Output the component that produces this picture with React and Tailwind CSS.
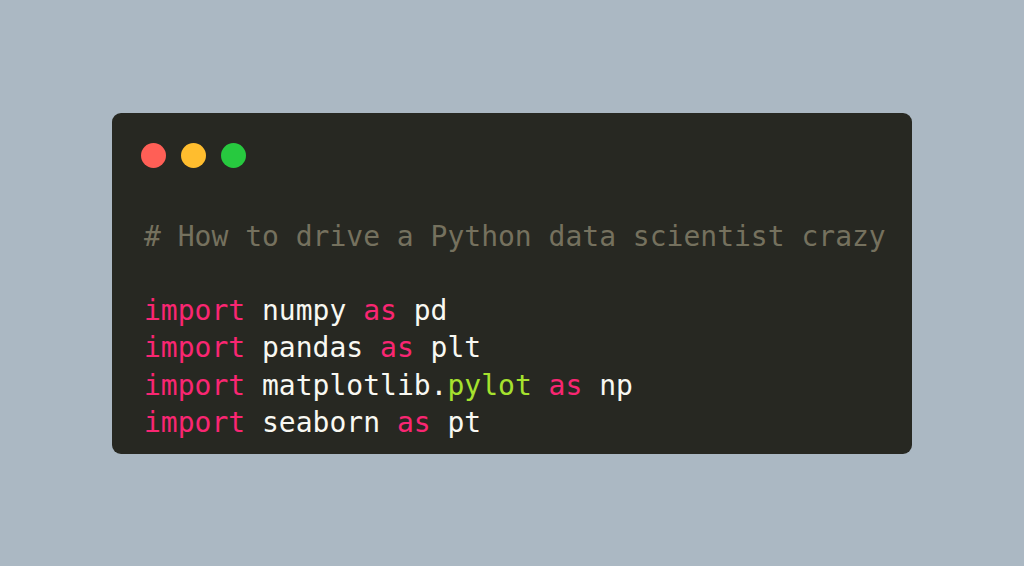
import React from "react";

const lines = [
  ["numpy", null, "pd"],
  ["pandas", null, "plt"],
  ["matplotlib.", "pylot", "np"],
  ["seaborn", null, "pt"],
];

export default function App() {
  return (
    <div className="w-[1024px] h-[566px] bg-[#abb8c3] flex items-center justify-center">
      <div className="w-[800px] h-[341px] bg-[#272822] rounded-[9px] pt-[30px] px-[29px]">
        {/* window controls */}
        <div className="flex gap-[15px]">
          <span className="w-[25px] h-[25px] rounded-full bg-[#ff5f56]" />
          <span className="w-[25px] h-[25px] rounded-full bg-[#ffbd2e]" />
          <span className="w-[25px] h-[25px] rounded-full bg-[#27c93f]" />
        </div>
        <pre className="mt-[50px] ml-[3px] text-[28px] leading-[37.3px] text-[#f8f8f2] font-['DejaVu_Sans_Mono',monospace]">
          <div className="text-[#75715e]"># How to drive a Python data scientist crazy</div>
          <div>&nbsp;</div>
          {lines.map(([mod, attr, alias]) => (
            <div key={alias}>
              <span className="text-[#f92672]">import</span> {mod}
              {attr && <span className="text-[#a6e22e]">{attr}</span>}{" "}
              <span className="text-[#f92672]">as</span> {alias}
            </div>
          ))}
        </pre>
      </div>
    </div>
  );
}
